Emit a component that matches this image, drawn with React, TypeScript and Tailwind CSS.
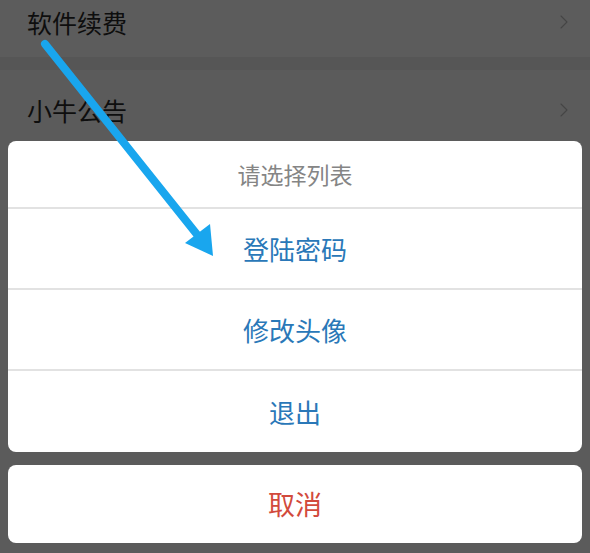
import { ChevronRight } from 'lucide-react'

const FONT = "font-['Noto_Sans_CJK_SC','Noto_Sans',sans-serif]"

const ACTIONS = ['登陆密码', '修改头像', '退出']

function SettingRow({ label, className }: { label: string; className: string }) {
  return (
    <div className={`flex items-center justify-between pl-[27px] pr-[14px] ${className}`}>
      <span className="text-[25px] text-[#0e0e0e] leading-none">{label}</span>
      <ChevronRight className="w-[24px] h-[24px] text-[#454545]" strokeWidth={1.1} />
    </div>
  )
}

function Arrow() {
  return (
    <svg className="absolute left-0 top-0 pointer-events-none" width="590" height="553" viewBox="0 0 590 553">
      <line x1="45" y1="44" x2="199" y2="237" stroke="#19a6ee" strokeWidth="8" strokeLinecap="round" />
      <polygon points="213,256 185,243 210,224" fill="#19a6ee" />
    </svg>
  )
}

export default function App() {
  return (
    <div className={`relative w-[590px] h-[553px] overflow-hidden bg-[#5b5b5b] ${FONT}`}>
      {/* page underneath the dim overlay */}
      <div className="flex flex-col">
        <SettingRow label="软件续费" className="h-[57px] pb-[13px] bg-[#5c5c5c]" />
        <div className="h-[13px] bg-[#565656]" />
        <SettingRow label="小牛公告" className="h-[80px] bg-[#5b5b5b]" />
      </div>

      {/* action sheet */}
      <div className="absolute inset-0 flex flex-col justify-end px-[8px] pb-[10px] gap-[13px]">
        <div className="bg-white rounded-[8px] overflow-hidden flex flex-col">
          <div className="h-[68px] flex items-center justify-center text-[23px] text-[#858585] border-b-[2px] border-[#e2e2e2]">
            请选择列表
          </div>
          {ACTIONS.map((a, i) => (
            <div
              key={a}
              className={`h-[81px] flex items-center justify-center text-[26px] text-[#2a78b8] ${
                i < ACTIONS.length - 1 ? 'border-b-[2px] border-[#e2e2e2]' : ''
              }`}
            >
              {a}
            </div>
          ))}
        </div>
        <div className="h-[78px] bg-white rounded-[8px] flex items-center justify-center text-[27px] text-[#d24a3c]">
          取消
        </div>
      </div>

      <Arrow />
    </div>
  )
}
